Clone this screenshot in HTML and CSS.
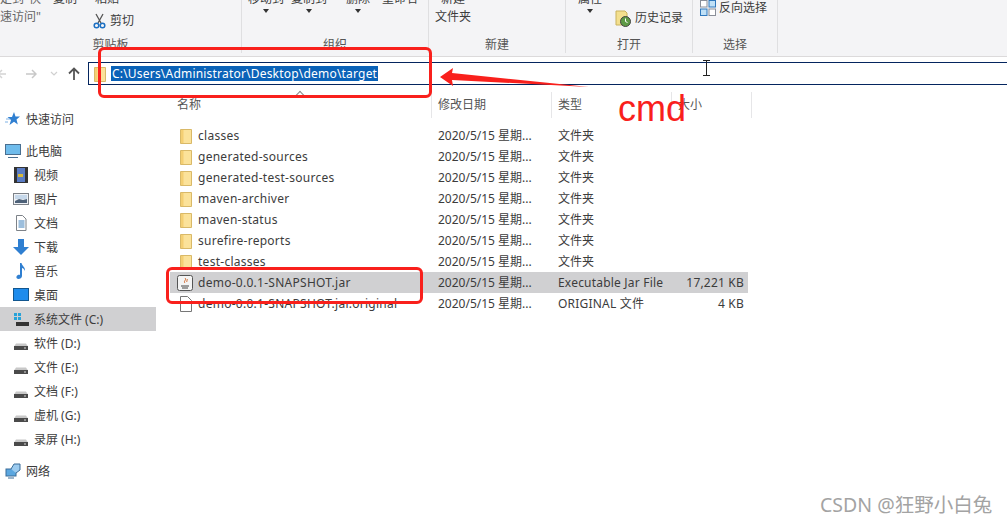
FILE: index.html
```html
<!DOCTYPE html>
<html lang="zh-CN">
<head>
  <meta charset="UTF-8">
  <title>target</title>
  <link rel="stylesheet" href="styles.css">
</head>
<body>
<svg class="defs" width="0" height="0">
  <symbol id="folder" viewBox="0 0 12 16">
    <path d="M.5 1.500h11v14H.5z" fill="#fbe29a" stroke="#d9b968"/>
    <path d="M1 2h2.500v13H1z" fill="#f4cf73"/>
  </symbol>
  <symbol id="hdd" viewBox="0 0 16 16">
    <path d="M3 8.500h10l2 3H1z" fill="#c8c8c8"/>
    <rect x="1" y="11" width="14" height="4" fill="#4a4a4a"/>
    <rect x="11" y="12.500" width="2" height="1" fill="#d8d8d8"/>
  </symbol>
</svg>

<header class="ribbon">
  <section class="group group-clip">
    <div class="tools">
      <div class="tool tool-pin">定到"快<br>速访问"</div>
      <div class="tool tool-copy">复制</div>
      <div class="tool">粘贴
        <div class="cut">
          <svg width="13" height="16" viewBox="0 0 13 16"><path d="M3 1l5 9M10 1L5 10" stroke="#555" fill="none" stroke-width="1.300"/><circle cx="3.500" cy="12.500" r="2.300" fill="none" stroke="#1c6fc2" stroke-width="1.500"/><circle cx="9.500" cy="12.500" r="2.300" fill="none" stroke="#1c6fc2" stroke-width="1.500"/></svg>
          剪切
        </div>
      </div>
    </div>
    <div class="group-label">剪贴板</div>
  </section>
  <section class="group group-org">
    <div class="tools">
      <div class="tool tool-drop">移动到<i class="caret"></i></div>
      <div class="tool tool-drop">复制到<i class="caret"></i></div>
      <div class="tool tool-drop tool-del">删除<i class="caret"></i></div>
      <div class="tool tool-drop tool-ren">重命名</div>
    </div>
    <div class="group-label">组织</div>
  </section>
  <section class="group group-new">
    <div class="tools">
      <div class="tool tool-drop">新建<br>文件夹</div>
    </div>
    <div class="group-label">新建</div>
  </section>
  <section class="group group-open">
    <div class="tools">
      <div class="tool tool-drop">属性<i class="caret"></i></div>
      <div class="tool history">
        <svg width="16" height="17" viewBox="0 0 16 17"><path d="M1 1h9l2 2v12H1z" fill="#f3df8e" stroke="#c9b25c"/><circle cx="10.500" cy="11.500" r="5" fill="#5d9a45" stroke="#444"/><path d="M10.500 8.500v3l2 1" stroke="#fff" fill="none"/></svg>
        历史记录
      </div>
    </div>
    <div class="group-label">打开</div>
  </section>
  <section class="group group-select">
    <div class="tools">
      <div class="tool invert">
        <svg width="16" height="16" viewBox="0 0 16 16"><rect x=".5" y=".5" width="6.500" height="6.500" fill="#fff" stroke="#8a8f99"/><rect x="9" y=".5" width="6.500" height="6.500" fill="#bfe0f7" stroke="#2f78bd"/><rect x=".5" y="9" width="6.500" height="6.500" fill="#bfe0f7" stroke="#2f78bd"/><rect x="9" y="9" width="6.500" height="6.500" fill="#fff" stroke="#8a8f99"/></svg>
        反向选择
      </div>
    </div>
    <div class="group-label">选择</div>
  </section>
</header>

<nav class="addressbar">
  <div class="nav-buttons">
    <svg class="nav-back" width="10" height="12" viewBox="0 0 10 12"><path d="M9 6H2M5 2L1 6l4 4" stroke="#d4d4d4" stroke-width="1.500" fill="none"/></svg>
    <svg class="nav-forward" width="12" height="12" viewBox="0 0 12 12"><path d="M1 6h9M7 2l4 4-4 4" stroke="#c8c8c8" stroke-width="1.500" fill="none"/></svg>
    <svg class="nav-recent" width="8" height="6" viewBox="0 0 8 6"><path d="M1 1l3 3 3-3" stroke="#d0d0d0" stroke-width="1.200" fill="none"/></svg>
    <svg class="nav-up" width="12" height="13" viewBox="0 0 12 13"><path d="M6 13V2M1 6.500L6 1.500l5 5" stroke="#555" stroke-width="1.800" fill="none"/></svg>
  </div>
  <div class="address">
    <svg class="address-icon" width="12" height="16"><use href="#folder"/></svg>
    <span class="address-path">C:\Users\Administrator\Desktop\demo\target</span>
  </div>
</nav>

<div class="content">
  <aside class="sidebar">
    <div class="side-item top">
      <svg width="16" height="16" viewBox="0 0 16 16"><path d="M9 1l1.500 4.500H15l-3.500 3 1.300 5L9 10.800 4.500 14l1.500-5L2.500 6H7z" fill="#2f7fd1"/><path d="M1 8h4M0 11h3" stroke="#7fb2e5"/></svg>
      <span>快速访问</span>
    </div>
    <div class="side-item top gap">
      <svg width="16" height="16" viewBox="0 0 16 16"><rect x=".5" y="1.500" width="15" height="10" fill="#6fbcec" stroke="#4a6f90"/><path d="M3 14.500h10" stroke="#4a6f90"/></svg>
      <span>此电脑</span>
    </div>
    <div class="side-item">
      <svg width="14" height="16" viewBox="0 0 14 16"><rect width="14" height="16" fill="#333"/><rect x="3" y="1" width="8" height="14" fill="#5a7cc4"/><rect x="4" y="7" width="5" height="3" fill="#d6b93a"/></svg>
      <span>视频</span>
    </div>
    <div class="side-item">
      <svg width="16" height="14" viewBox="0 0 16 14"><rect x=".5" y="1.500" width="15" height="11" fill="#eef1f5" stroke="#7d8288"/><path d="M2 9l4-2 4 1 4-1v4H2z" fill="#4d6178"/><rect x="2" y="3" width="12" height="4" fill="#c6d8ea"/></svg>
      <span>图片</span>
    </div>
    <div class="side-item">
      <svg width="14" height="16" viewBox="0 0 14 16"><path d="M2.500.5h6l3.500 3.500v11.500H2.500z" fill="#fff" stroke="#7d8288"/><path d="M4.500 6h6M4.500 8h6M4.500 10h6M4.500 12h6" stroke="#3b7fba"/></svg>
      <span>文档</span>
    </div>
    <div class="side-item">
      <svg width="16" height="16" viewBox="0 0 16 16"><path d="M5 0h6v8h5l-8 8-8-8h5z" fill="#2f7fd1"/></svg>
      <span>下载</span>
    </div>
    <div class="side-item">
      <svg width="14" height="16" viewBox="0 0 14 16"><path d="M6 0h1.500c.5 3 4 4 3.500 8-.8-2-2-3-3-3v8c0 2-2 3-3.500 3S2 15 2.500 13.500 5 11.500 6 12z" fill="#2f7fd1"/></svg>
      <span>音乐</span>
    </div>
    <div class="side-item">
      <svg width="16" height="14" viewBox="0 0 16 14"><rect x=".5" y=".5" width="15" height="12" fill="#1f8cec" stroke="#12568f"/></svg>
      <span>桌面</span>
    </div>
    <div class="side-item selected">
      <svg width="16" height="16" viewBox="0 0 16 16"><path d="M1 2h3v3H1zM5 2h3v3H5zM1 6h3v3H1zM5 6h3v3H5z" fill="#27a2d8"/><rect x="3" y="11" width="13" height="4" fill="#333"/></svg>
      <span>系统文件 (C:)</span>
    </div>
    <div class="side-item"><svg width="16" height="16"><use href="#hdd"/></svg><span>软件 (D:)</span></div>
    <div class="side-item"><svg width="16" height="16"><use href="#hdd"/></svg><span>文件 (E:)</span></div>
    <div class="side-item"><svg width="16" height="16"><use href="#hdd"/></svg><span>文档 (F:)</span></div>
    <div class="side-item"><svg width="16" height="16"><use href="#hdd"/></svg><span>虚机 (G:)</span></div>
    <div class="side-item"><svg width="16" height="16"><use href="#hdd"/></svg><span>录屏 (H:)</span></div>
    <div class="side-item top gap">
      <svg width="16" height="16" viewBox="0 0 16 16"><rect x="1" y="6" width="10" height="7" fill="#5ba7e0" stroke="#3a6d99"/><path d="M6 6l3-5h6v6l-4 3" fill="#9ccbef" stroke="#3a6d99"/><path d="M3 15h6" stroke="#3a6d99"/></svg>
      <span>网络</span>
    </div>
  </aside>

  <main class="files">
    <div class="file-head">
      <div class="col">名称<i class="sort-caret"></i></div>
      <div class="col">修改日期</div>
      <div class="col">类型</div>
      <div class="col">大小</div>
    </div>
    <div class="file-row">
      <div class="name"><svg width="12" height="16"><use href="#folder"/></svg>classes</div>
      <div>2020/5/15 星期...</div><div>文件夹</div><div></div>
    </div>
    <div class="file-row">
      <div class="name"><svg width="12" height="16"><use href="#folder"/></svg>generated-sources</div>
      <div>2020/5/15 星期...</div><div>文件夹</div><div></div>
    </div>
    <div class="file-row">
      <div class="name"><svg width="12" height="16"><use href="#folder"/></svg>generated-test-sources</div>
      <div>2020/5/15 星期...</div><div>文件夹</div><div></div>
    </div>
    <div class="file-row">
      <div class="name"><svg width="12" height="16"><use href="#folder"/></svg>maven-archiver</div>
      <div>2020/5/15 星期...</div><div>文件夹</div><div></div>
    </div>
    <div class="file-row">
      <div class="name"><svg width="12" height="16"><use href="#folder"/></svg>maven-status</div>
      <div>2020/5/15 星期...</div><div>文件夹</div><div></div>
    </div>
    <div class="file-row">
      <div class="name"><svg width="12" height="16"><use href="#folder"/></svg>surefire-reports</div>
      <div>2020/5/15 星期...</div><div>文件夹</div><div></div>
    </div>
    <div class="file-row">
      <div class="name"><svg width="12" height="16"><use href="#folder"/></svg>test-classes</div>
      <div>2020/5/15 星期...</div><div>文件夹</div><div></div>
    </div>
    <div class="file-row selected">
      <div class="name">
        <svg class="jar" width="16" height="16" viewBox="0 0 16 16"><rect x=".5" y=".5" width="15" height="15" rx="2" fill="#f4f4f4" stroke="#555"/><path d="M4 11h8M5 13h6" stroke="#444"/><path d="M8 3c2 2-2 3 0 5M10 4c1 1-1 2 0 3" stroke="#d0662a" fill="none"/></svg>
        demo-0.0.1-SNAPSHOT.jar
      </div>
      <div>2020/5/15 星期...</div><div class="latin">Executable Jar File</div><div class="size">17,221 KB</div>
    </div>
    <div class="file-row">
      <div class="name">
        <svg width="12" height="16" viewBox="0 0 12 16"><path d="M.5.5h7l4 4v11H.5z" fill="#fff" stroke="#777"/></svg>
        demo-0.0.1-SNAPSHOT.jar.original
      </div>
      <div>2020/5/15 星期...</div><div class="latin">ORIGINAL 文件</div><div class="size">4 KB</div>
    </div>
  </main>
</div>

<!-- annotations drawn over the screenshot -->
<div class="mark mark-address"></div>
<div class="mark mark-jar"></div>
<svg class="mark-arrow" width="155" height="24" viewBox="0 0 155 24"><path d="M1 9L14 0l-1 5 137 14-137-7 1 6z" fill="#f9201c"/></svg>
<div class="cmd-label">cmd</div>
<svg class="ibeam" width="9" height="16" viewBox="0 0 9 16"><path d="M1 .5h7M1 15.500h7M4.500 .5v15" stroke="#222" fill="none"/></svg>
<div class="watermark">CSDN @狂野小白兔</div>
</body>
</html>
```

FILE: styles.css
```css
* {
  box-sizing: border-box;
}

body {
  margin: 0;
  height: 523px;
  overflow: hidden;
  position: relative;
  background-color: #fff;
  color: #3c3c3c;
  font-family: "Noto Sans", "Noto Sans CJK SC", sans-serif;
  font-size: 12px;
}

.defs {
  position: absolute;
}

/* Ribbon */
.ribbon {
  display: flex;
  height: 57px;
  overflow: hidden;
  background-color: #f4f4f6;
  border-bottom: 1px solid #dcdadb;
}

.group {
  display: flex;
  flex-direction: column;
  height: 53px;
  border-right: 1px solid #dfdfe1;
}

.group-clip { width: 242px; }
.group-org { width: 187px; }
.group-new { width: 137px; }
.group-open { width: 127px; }
.group-select { width: 85px; }

.tools {
  display: flex;
  align-items: flex-start;
  margin-top: -10px;
  line-height: 18px;
}

.group-label {
  margin-top: auto;
  height: 16px;
  line-height: 16px;
  text-align: center;
  color: #555;
}

.group-clip .group-label {
  padding-right: 20px;
}

.tool-pin { width: 53px; color: #666; }
.tool-copy { width: 42px; }

.cut {
  display: flex;
  align-items: center;
  gap: 4px;
  margin: 4px 0 0 -2px;
}

.tool-drop {
  display: flex;
  flex-direction: column;
  align-items: center;
}

.group-org .tools { padding-left: 6px; gap: 7px; }
.tool-del { margin-left: 12px; }
.tool-ren { margin-left: 5px; }

.group-new .tools { padding-left: 6px; }
.group-new .tool-drop { display: block; text-align: center; }

.group-open .tools { padding-left: 12px; }

.caret {
  display: block;
  width: 0;
  height: 0;
  margin-top: 1px;
  border: 3px solid transparent;
  border-bottom: 0;
  border-top: 4px solid #333;
}

.history {
  display: flex;
  align-items: center;
  gap: 4px;
  margin: 19px 0 0 13px;
}

.invert {
  display: flex;
  align-items: center;
  gap: 3px;
  margin: 9px 0 0 7px;
}

/* Address bar */
.addressbar {
  display: flex;
  height: 23px;
  margin-top: 5px;
}

.nav-buttons {
  display: flex;
  align-items: center;
  width: 88px;
}

.nav-back { margin-left: -3px; }
.nav-forward { margin-left: 18px; }
.nav-recent { margin-left: 13px; }
.nav-up { margin-left: 10px; }

.address {
  flex: 1;
  display: flex;
  align-items: center;
  padding-left: 5px;
  border: 1px solid #04255f;
  border-right: 0;
  background-color: #fff;
}

.address-path {
  margin-left: 5px;
  padding: 0 1px;
  line-height: 15px;
  letter-spacing: .2px;
  background-color: #0a62b8;
  color: #fff;
}

/* Content */
.content {
  display: flex;
  margin-top: 1px;
}

.sidebar {
  width: 156px;
  padding-top: 21px;
}

.side-item {
  display: flex;
  align-items: center;
  gap: 5px;
  height: 24px;
  padding-left: 13px;
}

.side-item.top {
  padding-left: 5px;
}

.side-item.gap {
  margin-top: 8px;
}

.side-item.selected {
  background-color: #d0d0d2;
}

.side-item svg {
  flex: none;
  width: 16px;
}

.files {
  padding: 6px 0 0 14px;
}

.file-head {
  display: grid;
  grid-template-columns: 261px 120px 120px 80px;
  height: 25px;
  margin-bottom: 8px;
  line-height: 26px;
  color: #555;
}

.col {
  position: relative;
  margin-right: -1px;
  padding-left: 7px;
  border-right: 1px solid #e6e6e8;
}

.sort-caret {
  position: absolute;
  top: 0;
  left: 127px;
  width: 6px;
  height: 6px;
  border-left: 1px solid #888;
  border-top: 1px solid #888;
  transform: rotate(45deg);
}

.file-row {
  display: grid;
  grid-template-columns: 261px 120px 120px 77px;
  width: 578px;
  height: 21px;
  line-height: 21px;
}

.file-row > div {
  padding-left: 7px;
  white-space: nowrap;
}

.file-row > .name {
  display: flex;
  align-items: center;
  gap: 6px;
  padding-left: 10px;
  letter-spacing: .27px;
}

.file-row .jar {
  margin: 0 -1px 0 -3px;
}

.file-row > .latin {
  letter-spacing: .2px;
}

.file-row > .size {
  padding: 0 4px 0 0;
  text-align: right;
  letter-spacing: .2px;
}

.file-row.selected {
  background-color: #d0d0d2;
}

/* Annotations */
.mark {
  position: absolute;
  border: 3px solid #f9201c;
}

.mark-address {
  top: 47px;
  left: 98px;
  width: 334px;
  height: 51px;
  border-radius: 6px;
}

.mark-jar {
  top: 267px;
  left: 166px;
  width: 257px;
  height: 37px;
  border-radius: 6px;
}

.mark-arrow {
  position: absolute;
  top: 68px;
  left: 439px;
}

.cmd-label {
  position: absolute;
  top: 85px;
  left: 618px;
  font-family: "Liberation Sans", sans-serif;
  font-size: 36px;
  line-height: 48px;
  color: #f9201c;
}

.ibeam {
  position: absolute;
  top: 60px;
  left: 702px;
}

.watermark {
  position: absolute;
  top: 492px;
  left: 820px;
  font-size: 19.5px;
  line-height: 25px;
  color: #a3a3a3;
}
```
